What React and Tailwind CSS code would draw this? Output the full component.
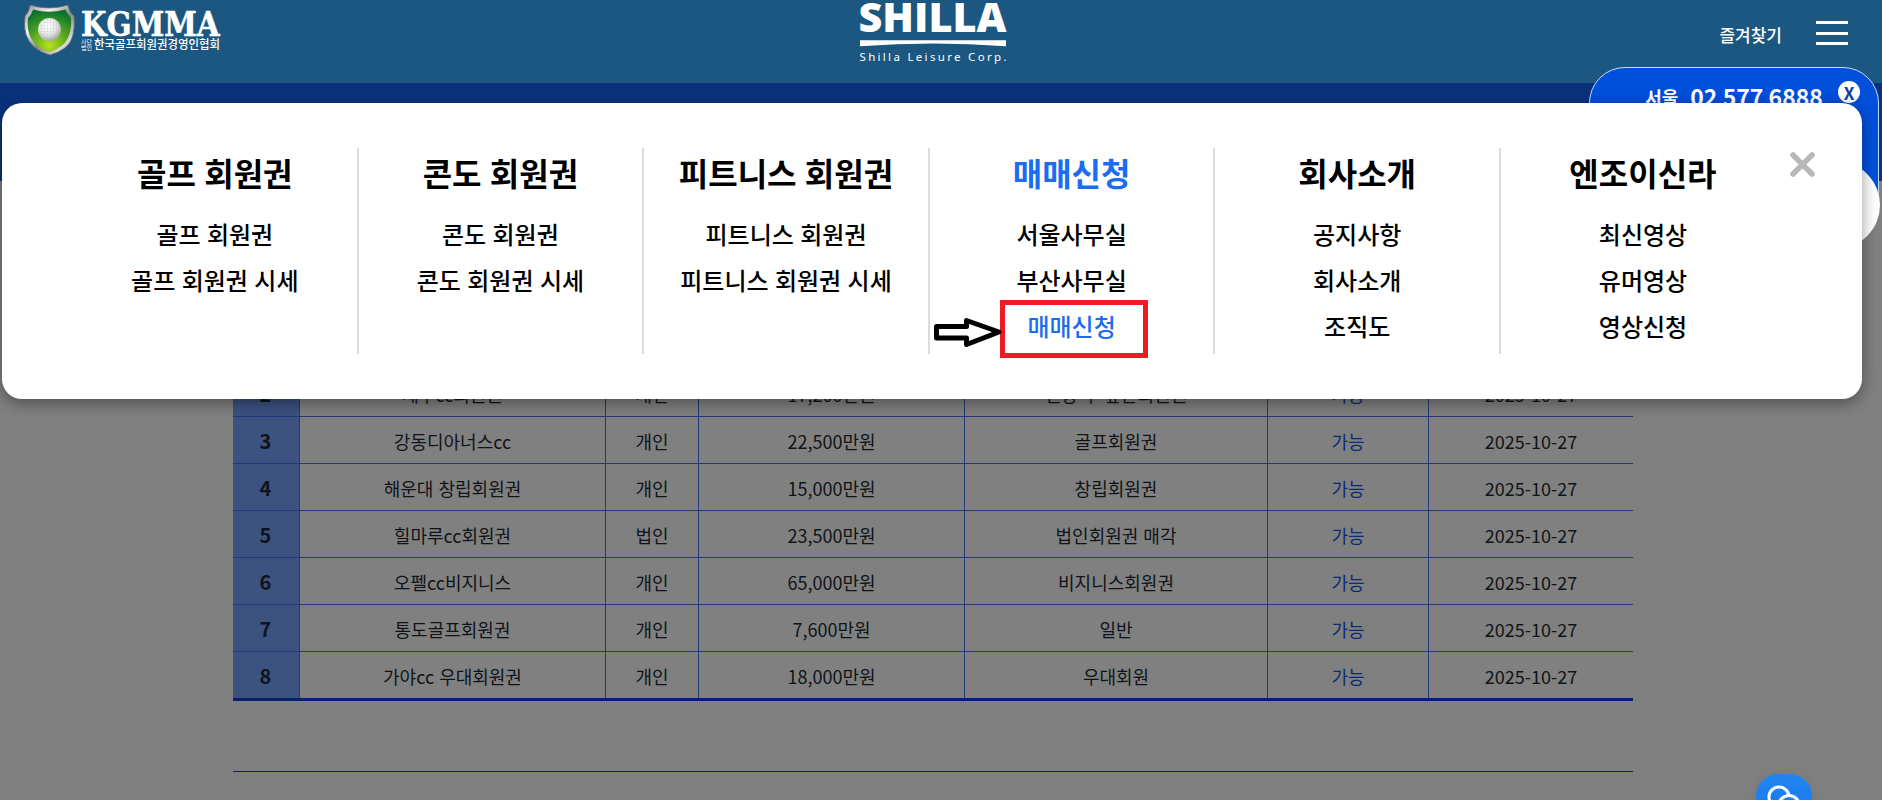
import { useState } from 'react';

const menus = [
  { title: '골프 회원권', items: ['골프 회원권', '골프 회원권 시세'] },
  { title: '콘도 회원권', items: ['콘도 회원권', '콘도 회원권 시세'] },
  { title: '피트니스 회원권', items: ['피트니스 회원권', '피트니스 회원권 시세'] },
  { title: '매매신청', items: ['서울사무실', '부산사무실', '매매신청'] },
  { title: '회사소개', items: ['공지사항', '회사소개', '조직도'] },
  { title: '엔조이신라', items: ['최신영상', '유머영상', '영상신청'] },
];

const rows = [
  { no: 2, name: '제주cc회원권', type: '개인', price: '17,200만원', memo: '인상 후 높은회원권' },
  { no: 3, name: '강동디아너스cc', type: '개인', price: '22,500만원', memo: '골프회원권' },
  { no: 4, name: '해운대 창립회원권', type: '개인', price: '15,000만원', memo: '창립회원권' },
  { no: 5, name: '힐마루cc회원권', type: '법인', price: '23,500만원', memo: '법인회원권 매각' },
  { no: 6, name: '오펠cc비지니스', type: '개인', price: '65,000만원', memo: '비지니스회원권' },
  { no: 7, name: '통도골프회원권', type: '개인', price: '7,600만원', memo: '일반' },
  { no: 8, name: '가야cc 우대회원권', type: '개인', price: '18,000만원', memo: '우대회원' },
];

function KgmmaLogo() {
  return (
    <svg width="210" height="60" viewBox="0 0 210 60" className="shrink-0">
      <defs>
        <linearGradient id="rim" x1="0" y1="0" x2="1" y2="1">
          <stop offset="0" stopColor="#8d8d8d" />
          <stop offset="0.3" stopColor="#f1f1f1" />
          <stop offset="0.55" stopColor="#858585" />
          <stop offset="0.8" stopColor="#d9d9d9" />
          <stop offset="1" stopColor="#6f6f6f" />
        </linearGradient>
        <radialGradient id="field" cx="0.5" cy="0.85" r="0.85">
          <stop offset="0" stopColor="#b9e01c" />
          <stop offset="0.45" stopColor="#5fae1c" />
          <stop offset="1" stopColor="#08702f" />
        </radialGradient>
        <radialGradient id="ball" cx="0.42" cy="0.35" r="0.65">
          <stop offset="0" stopColor="#ffffff" />
          <stop offset="0.6" stopColor="#e2e4e2" />
          <stop offset="1" stopColor="#a5aba3" />
        </radialGradient>
        <pattern id="dimples" width="3" height="3" patternUnits="userSpaceOnUse">
          <circle cx="1.5" cy="1.5" r="0.7" fill="#b5b9b5" opacity="0.6" />
        </pattern>
      </defs>
      <path
        d="M14 5 Q33 11 52 5 Q53 12 58 16 Q60 40 49 48 Q42 53 34 55 Q25 53 18 47 Q6 36 9 16 Q13 12 14 5Z"
        fill="url(#rim)"
        stroke="#5c6468"
        strokeWidth="0.8"
      />
      <path
        d="M17 9.5 Q33 14 49.5 9.5 Q51 14 55 18 Q56 37 46 45.5 Q40 50 34 52 Q26 50 20 44.5 Q10 35 12 18 Q16 14 17 9.5Z"
        fill="url(#field)"
      />
      <circle cx="33.5" cy="29.5" r="11.5" fill="url(#ball)" />
      <circle cx="33.5" cy="29.5" r="11" fill="url(#dimples)" />
      <g fill="#fff">
        <text
          x="65"
          y="35.5"
          fontSize="33"
          fontWeight="700"
          fontFamily="DejaVu Serif, serif"
          stroke="#fff"
          strokeWidth="0.6"
          textLength="138.5"
          lengthAdjust="spacingAndGlyphs"
        >
          KGMMA
        </text>
        <g fontFamily="Noto Sans CJK KR, sans-serif">
          <text x="65" y="43.5" fontSize="6" textLength="11" lengthAdjust="spacingAndGlyphs">사단</text>
          <text x="65" y="50" fontSize="6" textLength="11" lengthAdjust="spacingAndGlyphs">법인</text>
          <text x="78" y="48.5" fontSize="12.5" fontWeight="500" textLength="126" lengthAdjust="spacingAndGlyphs">
            한국골프회원권경영인협회
          </text>
        </g>
      </g>
    </svg>
  );
}

function ShillaLogo() {
  return (
    <svg width="152" height="66" viewBox="-2 0 152 66" fill="#fff">
      <text x="-0.5" y="32.4" fontSize="41.5" fontWeight="800" fontFamily="Open Sans, sans-serif" textLength="148" lengthAdjust="spacingAndGlyphs">
        SHILLA
      </text>
      <path d="M1 40.3 H147 V46.3 Q74 40.8 1 46.3Z" />
      <text x="0.5" y="60.5" fontSize="11.5" fontFamily="Noto Sans, sans-serif" textLength="147">
        Shilla Leisure Corp.
      </text>
    </svg>
  );
}

function Header() {
  return (
    <header className="grid h-[83px] grid-cols-[841px_152px_1fr] bg-[#1b5780] pl-4 pr-[34px]">
      <KgmmaLogo />
      <ShillaLogo />
      <div className="flex h-[66px] items-center justify-end gap-[34px]">
        <span className="pt-[3px] text-[17px] font-medium text-white">즐겨찾기</span>
        <button className="flex w-8 flex-col gap-[7.5px]">
          <span className="h-[3px] w-full bg-white"></span>
          <span className="h-[3px] w-full bg-white"></span>
          <span className="h-[3px] w-full bg-white"></span>
        </button>
      </div>
    </header>
  );
}

function TradeTable() {
  return (
    <div className="w-[1400px] border-b-[3px] border-[#04206f] text-[18px] text-[#101418] [word-spacing:1px]">
      {rows.map((row) => (
        <div
          key={row.no}
          className="grid h-[47px] grid-cols-[67px_306px_93px_266px_303px_161px_204px] grid-rows-[46px] border-t border-[#22397a] text-center leading-[48px]"
        >
          <span className="border-r border-[#22397a] bg-[#3c5280] pr-px text-[20px] font-bold">{row.no}</span>
          <span className="border-r border-[#22397a]">{row.name}</span>
          <span className="border-r border-[#22397a]">{row.type}</span>
          <span className="border-r border-[#22397a]">{row.price}</span>
          <span className="border-r border-[#22397a]">{row.memo}</span>
          <span className="border-r border-[#22397a] text-[#0b2a78]">가능</span>
          <span>2025-10-27</span>
        </div>
      ))}
    </div>
  );
}

function PhoneWidget() {
  return (
    <div className="absolute left-[1589px] top-[67px] w-[291px]">
      <div className="h-[146px] w-[290px] rounded-t-[36px] border border-[#c9dcff] bg-[#0050dc] pt-1">
        <div className="flex items-center justify-center gap-3 font-bold text-white">
          <span className="pt-[2px] text-[18px] leading-[46px]">서울</span>
          <span className="text-[23px] leading-[46px]">02 577 6888</span>
        </div>
        <button className="absolute right-[20px] top-[14px] flex h-[22px] w-[22px] items-center justify-center rounded-full bg-white text-[17px] font-bold leading-none text-[#0a3f9c]">
          X
        </button>
      </div>
      <div className="-mt-[52px] h-[88px] rounded-[44px] bg-white"></div>
    </div>
  );
}

function ChatButton() {
  return (
    <button className="absolute left-[1756px] top-[774px] h-14 w-14 rounded-[22px] bg-linear-to-b from-[#2186f2] to-[#1673e6] shadow-[0_0_14px_rgba(0,0,0,0.08)]">
      <svg width="56" height="56" viewBox="0 0 56 56" fill="none" stroke="#fff" strokeWidth="3">
        <circle cx="23" cy="23" r="10" />
        <circle cx="33" cy="32" r="10.5" fill="#1d7fee" />
      </svg>
    </button>
  );
}

function MegaMenu({ active, onClose }) {
  return (
    <nav className="absolute left-[2px] top-[103px] h-[296px] w-[1860px] rounded-[20px] bg-white pl-[71px] pt-[45px] shadow-[0_4px_16px_rgba(0,0,0,0.4)]">
      <div className="flex h-[206px] [word-spacing:1px]">
        {menus.map((menu, i) => (
          <div
            key={menu.title}
            className={
              i < menus.length - 1
                ? 'w-[285.6px] border-r-2 border-[#dcdcdc] text-center'
                : 'w-[284px] text-center'
            }
          >
            <h2
              className={
                active === menu.title
                  ? 'mb-3.5 text-[32px] font-bold leading-[49px] text-[#1b6cf0]'
                  : 'mb-3.5 text-[32px] font-bold leading-[49px] text-black'
              }
            >
              {menu.title}
            </h2>
            <ul className="text-[24px] font-medium leading-[46px] text-black">
              {menu.items.map((item) => (
                <li key={item} className={active === item ? 'text-[#1b6cf0]' : ''}>
                  {item}
                </li>
              ))}
            </ul>
          </div>
        ))}
      </div>
      <button onClick={onClose} className="absolute left-[1788px] top-[49px]">
        <svg width="25" height="25" viewBox="0 0 25 25" stroke="#b8b8b8" strokeWidth="5.5" strokeLinecap="round">
          <path d="M3 3 L22 22 M22 3 L3 22" />
        </svg>
      </button>
      {/* highlighted menu item */}
      <div className="absolute left-[998px] top-[197px] h-[58px] w-[148px] border-[5px] border-[#ed1c24]"></div>
      <svg className="absolute left-[930px] top-[213px]" width="72" height="34" viewBox="0 0 72 34">
        <path
          d="M4.5 10.5 H34.5 V4.5 L67 16 L34.5 28.5 V22 H4.5Z"
          fill="#fff"
          stroke="#000"
          strokeWidth="5"
          strokeLinejoin="round"
        />
      </svg>
    </nav>
  );
}

function App() {
  const [open, setOpen] = useState(true);

  return (
    <div className="relative h-[800px] w-full overflow-hidden bg-[#808080] font-['Noto_Sans_CJK_KR',sans-serif]">
      <Header />
      <div className="h-[98px] bg-[#0a327c]"></div>
      <main className="pl-[233px] pt-[188px]">
        <TradeTable />
        <div className="mt-[70px] w-[1400px] border-t border-[#0b2468]"></div>
      </main>
      <PhoneWidget />
      <ChatButton />
      {open && <MegaMenu active="매매신청" onClose={() => setOpen(false)} />}
    </div>
  );
}

export default App;
